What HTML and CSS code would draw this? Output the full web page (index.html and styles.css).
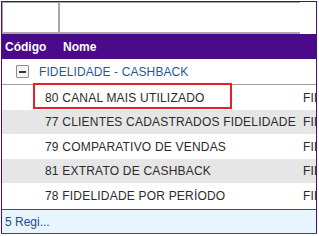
FILE: index.html
```html
<!DOCTYPE html>
<html>
<head>
<meta charset="utf-8">
<link rel="stylesheet" href="styles.css">
</head>
<body>
<div class="grid">
  <div class="filters">
    <div class="fcell fcode"></div>
    <div class="fcell fname"></div>
  </div>
  <div class="head">
    <span class="h-code">Código</span>
    <span class="h-name">Nome</span>
  </div>
  <div class="group">
    <span class="toggle"><span class="dash"></span></span>
    <span class="gtitle">FIDELIDADE - CASHBACK</span>
  </div>
  <div class="rows">
    <div class="row sel"><span class="name">80 CANAL MAIS UTILIZADO</span><span class="extra">FIDELIDADE</span><span class="focus"></span></div>
    <div class="row alt"><span class="name">77 CLIENTES CADASTRADOS FIDELIDADE</span><span class="extra">FIDELIDADE</span></div>
    <div class="row"><span class="name">79 COMPARATIVO DE VENDAS</span><span class="extra">FIDELIDADE</span></div>
    <div class="row alt"><span class="name">81 EXTRATO DE CASHBACK</span><span class="extra">FIDELIDADE</span></div>
    <div class="row"><span class="name">78 FIDELIDADE POR PERÍODO</span><span class="extra">FIDELIDADE</span></div>
  </div>
  <div class="footer">5 Regi...</div>
</div>
</body>
</html>
```
FILE: styles.css
```css
* { box-sizing: border-box; }
html, body { margin: 0; padding: 0; background: #fff; }
body { font-family: "Liberation Sans", Arial, sans-serif; }

.grid {
  margin: 1px 0 0 1px;
  width: 316px;
  height: 233px;
  border: 1px solid #4b0a8a;
  border-bottom: 1px solid #1d5a8c;
  overflow: hidden;
  display: flex;
  flex-direction: column;
}

.filters {
  display: flex;
  flex: none;
  height: 33px;
  width: 299px;
  margin-top: -1px;
  margin-left: -1px;
  border-top: 2px solid #a7a7a7;
  border-bottom: 2px solid #a7a7a7;
  border-left: 2px solid #a7a7a7;
}
.fcell { height: 100%; background: #fff; }
.fcode { width: 57px; border-right: 2px solid #a7a7a7; }
.fname { flex: 1; }

.head {
  flex: none;
  height: 25px;
  background: #4b0a8a;
  color: #fff;
  font-weight: bold;
  font-size: 12px;
  display: flex;
  align-items: center;
  padding-top: 1px;
}
.h-code { width: 61px; padding-left: 3px; }

.group {
  flex: none;
  height: 26px;
  border-bottom: 1px solid #a0a0a0;
  display: flex;
  align-items: center;
  color: #1f5a96;
  font-size: 12px;
  letter-spacing: 0.1px;
}
.toggle {
  margin-left: 14px;
  width: 13px;
  height: 13px;
  border: 1px solid #8c8c8c;
  background: #f4f4f4;
  border-radius: 1px;
  display: flex;
  align-items: center;
  justify-content: center;
  margin-right: 10px;
}
.dash { width: 7px; height: 2px; background: #333; }

.rows { display: flex; flex-direction: column; flex: none; }
.row {
  position: relative;
  height: 25px;
  display: flex;
  align-items: center;
  font-size: 12px;
  letter-spacing: 0.2px;
  color: #2b2b2b;
  background: #fff;
  white-space: nowrap;
}
.row:nth-child(2), .row:nth-child(4) { height: 24px; }
.row.alt { background: #e6e6e6; }
.name { flex: none; width: 301px; padding-left: 43px; overflow: hidden; }
.extra { flex: none; }
.focus {
  position: absolute;
  left: 31px;
  top: -2px;
  width: 199px;
  height: 26px;
  border: 2px solid #e5202b;
}

.footer {
  margin-top: auto;
  flex: none;
  height: 24px;
  border-top: 1px solid #1d5a8c;
  background: #e8f4fe;
  color: #1d4f80;
  font-size: 12px;
  display: flex;
  align-items: center;
  padding-left: 3px;
}
```
